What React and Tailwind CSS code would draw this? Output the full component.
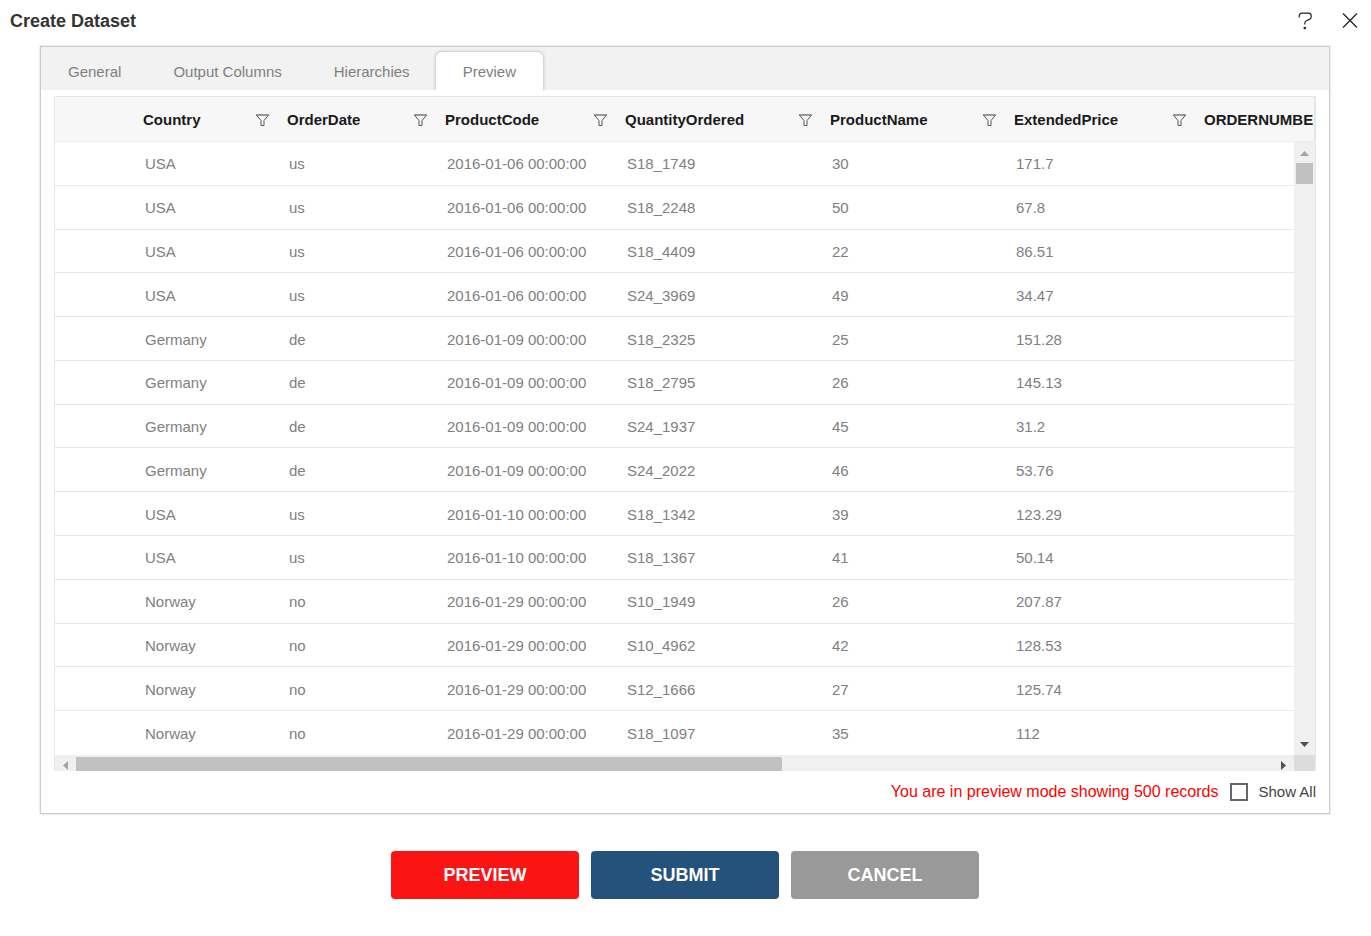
import React, { useState } from 'react';
import { clsx } from 'clsx';

const tabs = ['General', 'Output Columns', 'Hierarchies', 'Preview'];

const columns = ['Country', 'OrderDate', 'ProductCode', 'QuantityOrdered', 'ProductName', 'ExtendedPrice', 'ORDERNUMBE'];

const rows = [
    ['USA', 'us', '2016-01-06 00:00:00', 'S18_1749', '30', '171.7'],
    ['USA', 'us', '2016-01-06 00:00:00', 'S18_2248', '50', '67.8'],
    ['USA', 'us', '2016-01-06 00:00:00', 'S18_4409', '22', '86.51'],
    ['USA', 'us', '2016-01-06 00:00:00', 'S24_3969', '49', '34.47'],
    ['Germany', 'de', '2016-01-09 00:00:00', 'S18_2325', '25', '151.28'],
    ['Germany', 'de', '2016-01-09 00:00:00', 'S18_2795', '26', '145.13'],
    ['Germany', 'de', '2016-01-09 00:00:00', 'S24_1937', '45', '31.2'],
    ['Germany', 'de', '2016-01-09 00:00:00', 'S24_2022', '46', '53.76'],
    ['USA', 'us', '2016-01-10 00:00:00', 'S18_1342', '39', '123.29'],
    ['USA', 'us', '2016-01-10 00:00:00', 'S18_1367', '41', '50.14'],
    ['Norway', 'no', '2016-01-29 00:00:00', 'S10_1949', '26', '207.87'],
    ['Norway', 'no', '2016-01-29 00:00:00', 'S10_4962', '42', '128.53'],
    ['Norway', 'no', '2016-01-29 00:00:00', 'S12_1666', '27', '125.74'],
    ['Norway', 'no', '2016-01-29 00:00:00', 'S18_1097', '35', '112'],
];

const FilterIcon = () => (
    <svg width="13" height="12" viewBox="0 0 13 12" fill="none" stroke="#56595f" strokeWidth="1">
        <path d="M0 1H13" strokeWidth="1.2" />
        <path d="M0.6 1.2L5 6.6V11.5H8V6.6L12.4 1.2" />
    </svg>
);

const Arrow = ({ points, className }) => (
    <svg width="9" height="9" viewBox="0 0 9 9" className={className}>
        <polygon points={points} fill="currentColor" />
    </svg>
);

// Shared by the header and body tables so both line up
const Columns = () => (
    <colgroup>
        <col className="w-[76px]" />
        <col className="w-[144px]" />
        <col className="w-[158px]" />
        <col className="w-[180px]" />
        <col className="w-[205px]" />
        <col className="w-[184px]" />
        <col className="w-[190px]" />
        <col />
    </colgroup>
);

const DataGrid = () => (
    <div className="border border-b-0 border-[#e6e6e6]">
        {/* Header */}
        <div className="overflow-hidden bg-[#f7f7f7] border-b border-b-[#eeeeee] border-r border-r-[#e6e6e6]">
            <table className="table-fixed w-[1307px] min-w-full">
                <Columns />
                <thead>
                    <tr className="h-11">
                        <th />
                        {columns.map((name) => (
                            <th key={name} className="p-0 pt-0.5 pl-3 pr-1.5 text-left font-bold text-[#1a1a1a]">
                                <div className="flex items-center justify-between">
                                    <span>{name}</span>
                                    <button aria-label={`Filter ${name}`}><FilterIcon /></button>
                                </div>
                            </th>
                        ))}
                    </tr>
                </thead>
            </table>
        </div>

        {/* Body */}
        <div className="flex h-[613px]">
            <div className="flex-1 min-w-0 overflow-hidden">
                <table className="table-fixed border-separate border-spacing-0 w-[1307px] min-w-full h-full">
                    <Columns />
                    <tbody>
                        {rows.map((row) => (
                            <tr key={row[3]} className="*:border-b *:border-[#e6e6e6] last:*:border-transparent">
                                <td />
                                {row.map((value, i) => (
                                    <td key={i} className="p-0 pt-0.5 pl-3.5 text-[#808080]">{value}</td>
                                ))}
                                <td />
                            </tr>
                        ))}
                    </tbody>
                </table>
            </div>
            <div className="w-[21px] bg-[#f0f0f0] flex flex-col items-center pt-2 pb-1.5">
                <Arrow points="0,6 4.5,1 9,6" className="text-[#a3a3a3]" />
                <div className="w-[17px] h-[21px] mt-1 bg-[#c1c1c1]" />
                <Arrow points="0,2 9,2 4.5,7" className="mt-auto text-[#505050]" />
            </div>
        </div>

        {/* Horizontal scrollbar */}
        <div className="flex h-4">
            <div className="flex-1 min-w-0 flex bg-[#f0f0f0] pt-0.5">
                <div className="w-[21px] flex items-center justify-center pt-0.5">
                    <Arrow points="7,0 2,4.5 7,9" className="text-[#a3a3a3]" />
                </div>
                <div className="flex-1">
                    <div className="w-[59%] h-full bg-[#c1c1c1]" />
                </div>
                <div className="w-[21px] flex items-center justify-center pt-0.5">
                    <Arrow points="2,0 7,4.5 2,9" className="text-[#505050]" />
                </div>
            </div>
            <div className="w-[21px] bg-[#dcdcdc]" />
        </div>
    </div>
);

const App = () => {
    const [activeTab, setActiveTab] = useState('Preview');
    const [showAll, setShowAll] = useState(false);

    return (
        <div className="bg-white pr-px text-[15px] leading-5 font-['Liberation_Sans',Arial,sans-serif]">
            {/* Title bar */}
            <header className="h-[46px] pl-2.5 pr-3 pb-1 flex items-center justify-between">
                <h1 className="text-lg font-bold text-[#333333]">Create Dataset</h1>
                <div className="flex items-center gap-7">
                    <button aria-label="Help">
                        <svg width="16" height="18" viewBox="0 0 16 18" fill="none" stroke="#222222" strokeWidth="1.2">
                            <path d="M1.2 5.6V4.2Q1.2 1.2 4 1.2H10.4Q13.2 1.2 13.2 4V4.8Q13.2 6.6 11.4 7.4L8.4 8.8Q6.8 9.6 6.8 11.2V12.6" />
                            <circle cx="6.8" cy="16" r="1.3" fill="#222222" stroke="none" />
                        </svg>
                    </button>
                    <button aria-label="Close">
                        <svg width="16" height="16" viewBox="0 0 16 16" fill="none" stroke="#222222" strokeWidth="1.3">
                            <path d="M1 0.5L15 14.5M15 0.5L1 14.5" />
                        </svg>
                    </button>
                </div>
            </header>

            {/* Panel */}
            <section className="mx-10 border border-[#cccccc] shadow-[0_0_2px_#cccccc]">
                <nav className="h-[43px] pl-px bg-[#f2f2f2] flex items-end overflow-hidden">
                    {tabs.map((tab) => (
                        <button
                            key={tab}
                            onClick={() => setActiveTab(tab)}
                            className={clsx(
                                'h-[38px] pt-0.5 text-[#808080] rounded-t-md',
                                activeTab === tab ? 'px-[27px] bg-white shadow-[0_0_3px_1px_#c8c8c8]' : 'px-[26px]'
                            )}
                        >
                            {tab}
                        </button>
                    ))}
                </nav>

                <div className="pt-1.5 px-[13px]">
                    <DataGrid />
                    <div className="h-[42px] flex items-center justify-end">
                        <span className="text-base text-[#ff0000]">You are in preview mode showing 500 records</span>
                        <input
                            id="show-all"
                            type="checkbox"
                            checked={showAll}
                            onChange={(e) => setShowAll(e.target.checked)}
                            className="appearance-none size-[18px] ml-3 border-2 border-[#666666] bg-white checked:bg-[#666666]"
                        />
                        <label htmlFor="show-all" className="pl-2.5 text-[#444444]">Show All</label>
                    </div>
                </div>
            </section>

            {/* Actions */}
            <footer className="pt-[37px] pb-9 flex justify-center gap-3 text-lg font-bold text-white">
                <button className="w-[188px] h-12 rounded bg-[#fa1414]">PREVIEW</button>
                <button className="w-[188px] h-12 rounded bg-[#24527a]">SUBMIT</button>
                <button className="w-[188px] h-12 rounded bg-[#999999]">CANCEL</button>
            </footer>
        </div>
    );
};

export default App;
